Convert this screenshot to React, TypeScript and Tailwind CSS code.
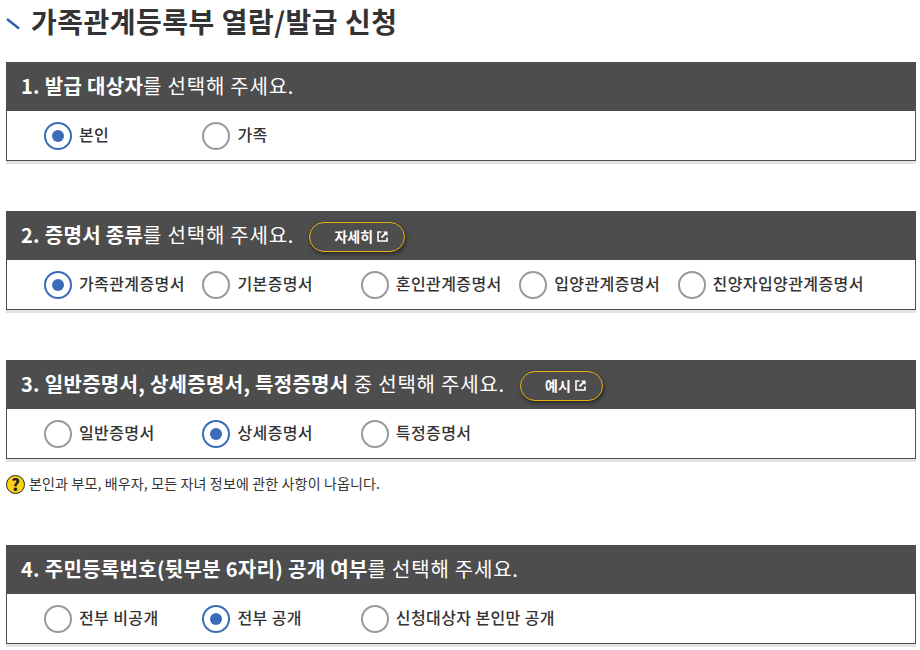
import type { ReactNode } from 'react';

const font = { cjk: 'font-["Noto_Sans_CJK_KR","Noto_Sans",sans-serif]' };

function Radio({ label, checked }: { label: string; checked?: boolean }) {
  return (
    <label className="flex items-center gap-[7px] w-[158.4px] shrink-0 whitespace-nowrap">
      <span
        className={`flex items-center justify-center shrink-0 w-[28px] h-[28px] rounded-full border-2 bg-white ${
          checked ? 'border-[#3b6cb7]' : 'border-[#999999]'
        }`}
      >
        {checked && <span className="w-[12px] h-[12px] rounded-full bg-[#3b6cb7]" />}
      </span>
      <span className="pb-[3px] text-[16px] tracking-[0.4px] font-medium text-[#333333]">{label}</span>
    </label>
  );
}

function LinkButton({ label, width }: { label: string; width: string }) {
  return (
    <span
      className={`flex items-center justify-center gap-[4px] h-[30px] ${width} ml-[15px] mt-[2px] pl-[8px] rounded-full border border-[#e6b30e] bg-[#4d4d4d] shadow-[1px_2px_4px_rgba(0,0,0,0.5)] text-[14px] tracking-normal font-bold text-white`}
    >
      {label}
      <svg width="11" height="11" viewBox="0 0 11 11" fill="none" stroke="white">
        <path d="M4.5 1 H1 V10 H10 V6.5" strokeWidth="1.6" />
        <path d="M4.5 6.5 L9 2" strokeWidth="1.8" />
        <path d="M6 0.5 H10.5 V5 Z" fill="white" stroke="none" />
      </svg>
    </span>
  );
}

function Section({ title, button, options }: { title: ReactNode; button?: ReactNode; options: ReactNode }) {
  return (
    <section className="w-[910px] ml-[6px] shadow-[0_3px_0_#e2e2e2]">
      <div className="flex items-center h-[49px] pl-[15px] bg-[#4d4d4d] text-white text-[20px] tracking-[0.78px] whitespace-nowrap">
        <h2 className="pb-[2px] font-normal">{title}</h2>
        {button}
      </div>
      <div className="flex items-center h-[50px] pl-[37px] bg-white border border-t-0 border-[#4d4d4d]">{options}</div>
    </section>
  );
}

function Strong({ children }: { children: ReactNode }) {
  return <b className="tracking-[0.3px]">{children}</b>;
}

export default function App() {
  return (
    <main className={`w-[920px] h-[650px] overflow-hidden bg-white ${font.cjk}`}>
      <header className="flex items-center h-[42px] pl-[6px]">
        <svg width="16" height="12" viewBox="0 0 16 12" className="mt-[5px]">
          <path d="M1 1 L13 10.5" stroke="#2f5fa8" strokeWidth="2.4" fill="none" />
        </svg>
        <h1 className="ml-[9px] text-[28px] font-bold text-[#333333] tracking-[0.5px] whitespace-nowrap">
          가족관계등록부 열람/발급 신청
        </h1>
      </header>

      <div className="mt-[20px]">
        <Section
          title={
            <>
              <Strong>1. 발급 대상자</Strong>를 선택해 주세요.
            </>
          }
          options={
            <>
              <Radio label="본인" checked />
              <Radio label="가족" />
            </>
          }
        />
      </div>

      <div className="mt-[50px]">
        <Section
          title={
            <>
              <Strong>2. 증명서 종류</Strong>를 선택해 주세요.
            </>
          }
          button={<LinkButton label="자세히" width="w-[96px]" />}
          options={
            <>
              <Radio label="가족관계증명서" checked />
              <Radio label="기본증명서" />
              <Radio label="혼인관계증명서" />
              <Radio label="입양관계증명서" />
              <Radio label="친양자입양관계증명서" />
            </>
          }
        />
      </div>

      <div className="mt-[50px]">
        <Section
          title={
            <>
              <Strong>3. 일반증명서, 상세증명서, 특정증명서</Strong> 중 선택해 주세요.
            </>
          }
          button={<LinkButton label="예시" width="w-[83px]" />}
          options={
            <>
              <Radio label="일반증명서" />
              <Radio label="상세증명서" checked />
              <Radio label="특정증명서" />
            </>
          }
        />
      </div>

      <p className="flex items-center gap-[4px] mt-[12px] ml-[6px] h-[24px] text-[14px] tracking-[0.15px] text-[#333333] whitespace-nowrap">
        <span className="flex items-center justify-center w-[19px] h-[19px] mt-[2px] rounded-full border-[1.5px] border-[#222222] bg-[#fcd116] text-[16px] leading-none font-black text-[#222222]">
          ?
        </span>
        본인과 부모, 배우자, 모든 자녀 정보에 관한 사항이 나옵니다.
      </p>

      <div className="mt-[50px]">
        <Section
          title={
            <>
              <Strong>4. 주민등록번호(뒷부분 6자리) 공개 여부</Strong>를 선택해 주세요.
            </>
          }
          options={
            <>
              <Radio label="전부 비공개" />
              <Radio label="전부 공개" checked />
              <Radio label="신청대상자 본인만 공개" />
            </>
          }
        />
      </div>
    </main>
  );
}
